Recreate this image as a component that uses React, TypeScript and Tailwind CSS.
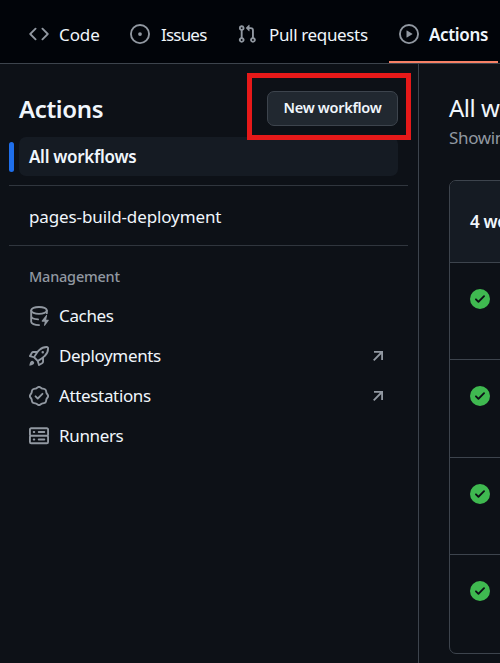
import React from "react";

const paths = {
  code: "m11.28 3.22 4.25 4.25a.75.75 0 0 1 0 1.06l-4.25 4.25a.749.749 0 0 1-1.275-.326.749.749 0 0 1 .215-.734L13.94 8l-3.72-3.72a.749.749 0 0 1 .326-1.275.749.749 0 0 1 .734.215Zm-6.56 0a.751.751 0 0 1 1.042.018.751.751 0 0 1 .018 1.042L2.06 8l3.72 3.72a.749.749 0 0 1-.326 1.275.749.749 0 0 1-.734-.215L.47 8.53a.75.75 0 0 1 0-1.06Z",
  issue: "M8 9.5a1.5 1.5 0 1 0 0-3 1.5 1.5 0 0 0 0 3ZM8 0a8 8 0 1 1 0 16A8 8 0 0 1 8 0ZM1.5 8a6.5 6.5 0 1 0 13 0 6.5 6.5 0 0 0-13 0Z",
  pull: "M1.5 3.25a2.25 2.25 0 1 1 3 2.122v5.256a2.251 2.251 0 1 1-1.5 0V5.372A2.25 2.25 0 0 1 1.5 3.25Zm5.677-.177L9.573.677A.25.25 0 0 1 10 .854V2.5h1A2.5 2.5 0 0 1 13.5 5v5.628a2.251 2.251 0 1 1-1.5 0V5a1 1 0 0 0-1-1h-1v1.646a.25.25 0 0 1-.427.177L7.177 3.427a.25.25 0 0 1 0-.354ZM3.75 2.5a.75.75 0 1 0 0 1.5.75.75 0 0 0 0-1.5Zm0 9.5a.75.75 0 1 0 0 1.5.75.75 0 0 0 0-1.5Zm8.25.75a.75.75 0 1 0 1.5 0 .75.75 0 0 0-1.5 0Z",
  play: "M8 0a8 8 0 1 1 0 16A8 8 0 0 1 8 0ZM1.5 8a6.5 6.5 0 1 0 13 0 6.5 6.5 0 0 0-13 0Zm4.879-2.773 4.264 2.559a.25.25 0 0 1 0 .428l-4.264 2.559A.25.25 0 0 1 6 10.559V5.442a.25.25 0 0 1 .379-.215Z",
  check: "M8 16A8 8 0 1 1 8 0a8 8 0 0 1 0 16Zm3.78-9.72a.751.751 0 0 0-.018-1.042.751.751 0 0 0-1.042-.018L6.75 9.19 5.28 7.72a.751.751 0 0 0-1.042.018.751.751 0 0 0-.018 1.042l2 2a.75.75 0 0 0 1.06 0Z",
  rocket: "M14.064 0h.186C15.216 0 16 .784 16 1.75v.186a8.752 8.752 0 0 1-2.564 6.186l-.458.459c-.314.314-.641.616-.979.904v3.207c0 .608-.315 1.172-.833 1.49l-2.774 1.707a.749.749 0 0 1-1.11-.418l-.954-3.102a1.214 1.214 0 0 1-.145-.125L3.754 9.816a1.218 1.218 0 0 1-.124-.145L.528 8.717a.749.749 0 0 1-.418-1.11l1.71-2.774A1.748 1.748 0 0 1 3.31 4h3.204c.288-.338.59-.665.904-.979l.459-.458A8.749 8.749 0 0 1 14.064 0ZM8.938 3.623h-.002l-.458.458c-.76.76-1.437 1.598-2.02 2.5l-1.5 2.317 2.143 2.143 2.317-1.5c.902-.583 1.74-1.26 2.499-2.02l.459-.458a7.25 7.25 0 0 0 2.123-5.127V1.75a.25.25 0 0 0-.25-.25h-.186a7.249 7.249 0 0 0-5.125 2.123ZM3.56 14.56c-.732.732-2.334 1.045-3.005 1.148a.234.234 0 0 1-.201-.064.234.234 0 0 1-.064-.201c.103-.671.416-2.273 1.15-3.003a1.502 1.502 0 1 1 2.12 2.12Zm6.94-3.935c-.088.06-.177.118-.266.175l-2.35 1.521.548 1.783 1.949-1.2a.25.25 0 0 0 .119-.213ZM3.678 8.116 5.2 5.766c.058-.09.117-.178.176-.266H3.309a.25.25 0 0 0-.213.119l-1.2 1.95ZM12 5a1 1 0 1 1-2 0 1 1 0 0 1 2 0Z",
  server: "M1.75 1h12.5c.966 0 1.75.784 1.75 1.75v4c0 .372-.116.717-.314 1 .198.283.314.628.314 1v4a1.75 1.75 0 0 1-1.75 1.75H1.75A1.75 1.75 0 0 1 0 12.75v-4c0-.358.109-.707.314-1a1.739 1.739 0 0 1-.314-1v-4C0 1.784.784 1 1.75 1ZM1.5 2.75v4c0 .138.112.25.25.25h12.5a.25.25 0 0 0 .25-.25v-4a.25.25 0 0 0-.25-.25H1.75a.25.25 0 0 0-.25.25Zm.25 5.75a.25.25 0 0 0-.25.25v4c0 .138.112.25.25.25h12.5a.25.25 0 0 0 .25-.25v-4a.25.25 0 0 0-.25-.25ZM7 4.75A.75.75 0 0 1 7.75 4h4.5a.75.75 0 0 1 0 1.5h-4.5A.75.75 0 0 1 7 4.75ZM7.75 10h4.5a.75.75 0 0 1 0 1.5h-4.5a.75.75 0 0 1 0-1.5ZM3 4.75A.75.75 0 0 1 3.75 4h.5a.75.75 0 0 1 0 1.5h-.5A.75.75 0 0 1 3 4.75ZM3.75 10h.5a.75.75 0 0 1 0 1.5h-.5a.75.75 0 0 1 0-1.5Z",
  verified: "m9.585.52.929.68c.153.112.331.186.518.215l1.138.175a2.678 2.678 0 0 1 2.24 2.24l.174 1.139c.029.187.103.365.215.518l.68.928a2.677 2.677 0 0 1 0 3.17l-.68.928a1.174 1.174 0 0 0-.215.518l-.175 1.138a2.678 2.678 0 0 1-2.241 2.241l-1.138.175a1.17 1.17 0 0 0-.518.215l-.928.68a2.677 2.677 0 0 1-3.17 0l-.928-.68a1.174 1.174 0 0 0-.518-.215L3.83 14.41a2.678 2.678 0 0 1-2.24-2.24l-.175-1.138a1.17 1.17 0 0 0-.215-.518l-.68-.928a2.677 2.677 0 0 1 0-3.17l.68-.928c.112-.153.186-.331.215-.518l.175-1.14a2.678 2.678 0 0 1 2.24-2.24l1.139-.175c.187-.029.365-.103.518-.215l.928-.68a2.677 2.677 0 0 1 3.17 0ZM7.303 1.728l-.927.68a2.67 2.67 0 0 1-1.18.489l-1.137.174a1.179 1.179 0 0 0-.987.987l-.174 1.136a2.677 2.677 0 0 1-.489 1.18l-.68.928a1.18 1.18 0 0 0 0 1.394l.68.927c.256.348.424.753.489 1.18l.174 1.137c.078.509.478.909.987.987l1.136.174a2.67 2.67 0 0 1 1.18.489l.928.68c.414.305.979.305 1.394 0l.927-.68a2.67 2.67 0 0 1 1.18-.489l1.137-.174a1.18 1.18 0 0 0 .987-.987l.174-1.136a2.67 2.67 0 0 1 .489-1.18l.68-.928a1.176 1.176 0 0 0 0-1.394l-.68-.927a2.686 2.686 0 0 1-.489-1.18l-.174-1.137a1.179 1.179 0 0 0-.987-.987l-1.136-.174a2.677 2.677 0 0 1-1.18-.489l-.928-.68a1.176 1.176 0 0 0-1.394 0ZM11.28 6.78l-3.75 3.75a.75.75 0 0 1-1.06 0L4.72 8.78a.751.751 0 0 1 .018-1.042.751.751 0 0 1 1.042-.018L7 8.94l3.22-3.22a.751.751 0 0 1 1.042.018.751.751 0 0 1 .018 1.042Z",
};

function Icon({ name, className = "text-[#9198a1]" }: { name: keyof typeof paths; className?: string }) {
  return (
    <svg viewBox="0 0 16 16" className={`size-5 shrink-0 fill-current ${className}`} aria-hidden="true">
      <path fillRule="evenodd" d={paths[name]} />
    </svg>
  );
}

function CacheIcon() {
  return (
    <svg viewBox="0 0 16 16" className="size-5 shrink-0 text-[#9198a1]" fill="none" stroke="currentColor" strokeWidth="1.5" strokeLinecap="round" aria-hidden="true">
      <ellipse cx="8" cy="3.5" rx="6.25" ry="2.75" />
      <path d="M1.75 3.5v9c0 1.5 2.7 2.75 6.3 2.75M1.75 8c0 1.25 2.2 2.5 5.5 2.73M14.25 3.5v2.3" />
      <path fill="currentColor" stroke="none" d="M14.49 7.582a.375.375 0 0 0-.66-.313l-3.625 4.625a.375.375 0 0 0 .295.606h2.127l-.619 2.922a.375.375 0 0 0 .666.304l3.125-4.125A.375.375 0 0 0 15.5 11h-1.778l.769-3.418Z" />
    </svg>
  );
}

function ExternalArrow() {
  return (
    <svg viewBox="0 0 10 10" className="size-2.5 text-[#9198a1]" fill="none" stroke="currentColor" strokeWidth="1.8" aria-hidden="true">
      <path d="M1 .9h8.1V9M9 1 .7 9.3" />
    </svg>
  );
}

function ManagementLink({ icon, label, external }: { icon: React.ReactNode; label: string; external?: boolean }) {
  return (
    <a className="flex h-10 items-center pl-[29px] pr-[35px] text-[17px] tracking-[-0.35px]">
      {icon}
      <span className="ml-2.5 grow">{label}</span>
      {external && <ExternalArrow />}
    </a>
  );
}

export default function App() {
  return (
    <div className="flex h-[663px] w-[500px] flex-col overflow-hidden bg-[#0d1117] font-['Noto_Sans',sans-serif] text-[#f0f6fc]">
      <nav className="flex h-16 shrink-0 whitespace-nowrap border-b border-[#3d444d] bg-[#010409] pl-[29px] text-[17px] tracking-[-0.35px]">
        <a className="flex h-[63px] w-[101px] items-center gap-2.5 pt-[5px]"><Icon name="code" /><span className="pt-0.5 tracking-[-0.1px]">Code</span></a>
        <a className="flex h-[63px] w-[107px] items-center gap-[11px] pt-[5px]"><Icon name="issue" /><span className="pt-0.5 tracking-[-0.8px]">Issues</span></a>
        <a className="flex h-[63px] w-[152px] items-center gap-3 pt-[5px]"><Icon name="pull" /><span className="pt-0.5">Pull requests</span></a>
        <a className="flex h-[63px] w-[109px] items-center gap-2.5 border-b-2 border-[#f78166] pl-2.5 pt-[7px] font-semibold"><Icon name="play" /><span className="pt-0.5">Actions</span></a>
      </nav>
      <div className="flex min-h-0 grow">
        <aside className="w-[419px] shrink-0 border-r border-[#3d444d]">
          <div className="relative flex h-[73px] items-center justify-between pl-[19px] pr-5 pt-[15px]">
            <h1 className="pt-0.5 text-[24px] font-semibold tracking-[-0.35px]">Actions</h1>
            <button className="h-[35px] w-[131px] rounded-[7px] border border-[#3d444d] bg-[#212830] text-[14.5px] font-semibold tracking-[-0.3px]">New workflow</button>
            <div className="pointer-events-none absolute left-[247px] top-[9px] h-[67px] w-[164px] border-[5px] border-[#e61919]" />
          </div>
          <div className="flex h-[39px] items-center pl-[9px]">
            <span className="h-[30px] w-[5px] rounded-full bg-[#1f6feb]" />
            <a className="ml-[5px] flex h-full w-[379px] items-center rounded-[7px] bg-[#151b23] pl-2.5 text-[17px] font-semibold tracking-[-0.3px]">All workflows</a>
          </div>
          <div className="ml-[9px] mr-2.5 mt-[9px] flex h-[61px] items-center border-y border-[#30363e] pl-5 pt-[2px] text-[17px] tracking-[-0.12px]">pages-build-deployment</div>
          <h2 className="flex h-[50px] items-center pl-[29px] pt-[12px] text-[14.5px] font-medium tracking-[-0.22px] text-[#9198a1]">Management</h2>
          <ManagementLink icon={<CacheIcon />} label="Caches" />
          <ManagementLink icon={<Icon name="rocket" />} label="Deployments" external />
          <ManagementLink icon={<Icon name="verified" />} label="Attestations" external />
          <ManagementLink icon={<Icon name="server" />} label="Runners" />
        </aside>
        <main className="grow overflow-hidden whitespace-nowrap pl-[30px] pt-[26px]">
          <h2 className="text-[24px] leading-[36px] tracking-[-0.5px]">All workflows</h2>
          <p className="text-[17px] leading-[24px] tracking-[-0.35px] text-[#9198a1]">Showing runs from all workflows</p>
          <section className="mt-[30px] h-[474px] w-[300px] overflow-hidden rounded-[7px] border border-[#3d444d]">
            <header className="flex h-[81px] items-center bg-[#151b23] pl-5 text-[17px] font-semibold tracking-[-0.35px]">4 workflow runs</header>
            {[0, 1, 2, 3].map((run) => (
              <div key={run} className="h-[97.3px] border-t border-[#3d444d] pl-5 pt-[26px]">
                <Icon name="check" className="text-[#3fb950]" />
              </div>
            ))}
          </section>
        </main>
      </div>
    </div>
  );
}
